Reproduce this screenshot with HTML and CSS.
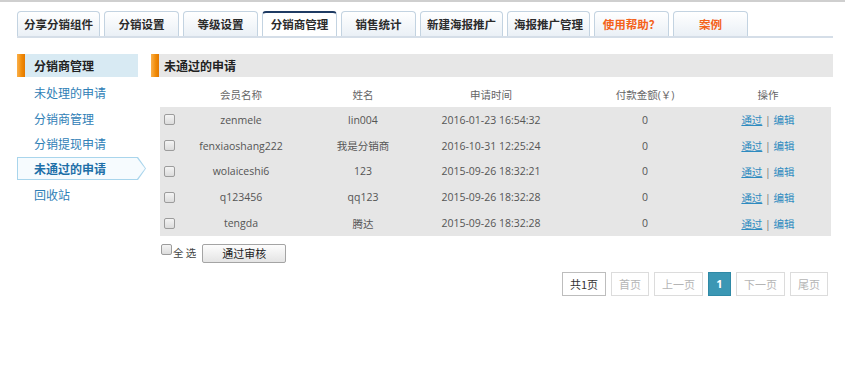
FILE: index.html
```html
<!DOCTYPE html>
<html lang="zh-CN">
<head>
<meta charset="utf-8">
<title>未通过的申请</title>
<link rel="stylesheet" href="styles.css">
</head>
<body>
<div class="page">
  <div class="tabs">
    <a class="tab wide">分享分销组件</a>
    <a class="tab">分销设置</a>
    <a class="tab">等级设置</a>
    <a class="tab active">分销商管理</a>
    <a class="tab">销售统计</a>
    <a class="tab wide">新建海报推广</a>
    <a class="tab wide">海报推广管理</a>
    <a class="tab orange">使用帮助？</a>
    <a class="tab orange">案例</a>
  </div>

  <div class="content">
    <aside class="sidebar">
      <div class="side-head"><span class="bar"></span>分销商管理</div>
      <ul class="side-list">
        <li class="side-item">未处理的申请</li>
        <li class="side-item">分销商管理</li>
        <li class="side-item">分销提现申请</li>
        <li class="side-item active"><span>未通过的申请</span></li>
        <li class="side-item">回收站</li>
      </ul>
    </aside>

    <main class="main">
      <div class="main-head"><span class="bar"></span>未通过的申请</div>
      <div class="table">
        <div class="row head">
          <div></div>
          <div>会员名称</div>
          <div>姓名</div>
          <div>申请时间</div>
          <div>付款金额(￥)</div>
          <div>操作</div>
          <div></div>
        </div>
        <div class="body">
          <div class="row">
            <div class="cbcell"><span class="cb"></span></div>
            <div>zenmele</div>
            <div>lin004</div>
            <div>2016-01-23 16:54:32</div>
            <div>0</div>
            <div class="ops"><a class="pass">通过</a> | <a class="edit">编辑</a></div>
            <div></div>
          </div>
          <div class="row">
            <div class="cbcell"><span class="cb"></span></div>
            <div>fenxiaoshang222</div>
            <div>我是分销商</div>
            <div>2016-10-31 12:25:24</div>
            <div>0</div>
            <div class="ops"><a class="pass">通过</a> | <a class="edit">编辑</a></div>
            <div></div>
          </div>
          <div class="row">
            <div class="cbcell"><span class="cb"></span></div>
            <div>wolaiceshi6</div>
            <div>123</div>
            <div>2015-09-26 18:32:21</div>
            <div>0</div>
            <div class="ops"><a class="pass">通过</a> | <a class="edit">编辑</a></div>
            <div></div>
          </div>
          <div class="row">
            <div class="cbcell"><span class="cb"></span></div>
            <div>q123456</div>
            <div>qq123</div>
            <div>2015-09-26 18:32:28</div>
            <div>0</div>
            <div class="ops"><a class="pass">通过</a> | <a class="edit">编辑</a></div>
            <div></div>
          </div>
          <div class="row">
            <div class="cbcell"><span class="cb"></span></div>
            <div>tengda</div>
            <div>腾达</div>
            <div>2015-09-26 18:32:28</div>
            <div>0</div>
            <div class="ops"><a class="pass">通过</a> | <a class="edit">编辑</a></div>
            <div></div>
          </div>
        </div>
      </div>

      <div class="foot">
        <span class="cb small"></span><span class="all">全 选</span>
        <button class="btn">通过审核</button>
      </div>

      <div class="pager">
        <span class="pg total">共1页</span>
        <span class="pg w38">首页</span>
        <span class="pg w49">上一页</span>
        <span class="pg cur">1</span>
        <span class="pg w49">下一页</span>
        <span class="pg w38">尾页</span>
      </div>
    </main>
  </div>
</div>
</body>
</html>
```

FILE: styles.css
```css
* { box-sizing: border-box; }
html, body { margin: 0; padding: 0; background: #fff; }
body {
  font-family: "Noto Sans CJK SC", "Noto Sans", sans-serif;
  font-size: 12px;
  color: #333;
  width: 845px;
  height: 374px;
  overflow: hidden;
}
.page {
  border-top: 2px solid #cfcfcf;
  padding-top: 9px;
}

/* Tabs */
.tabs {
  display: flex;
  gap: 4px;
  margin-left: 17px;
  width: 816px;
  border-bottom: 2px solid #d5dee8;
  height: 27px;
}
.tab {
  display: block;
  min-width: 75px;
  height: 25px;
  padding: 0 6px;
  border: 1px solid #c3d3e1;
  border-bottom: none;
  border-radius: 4px 4px 0 0;
  background: linear-gradient(#ffffff, #eaf0f6);
  text-align: center;
  font-weight: bold;
  font-size: 11.5px;
  line-height: 24px;
  color: #2b2b2b;
  white-space: nowrap;
}
.tab.wide { min-width: 83px; }
.tab.active {
  background: #fff;
  border-top: 2px solid #1f3b63;
  line-height: 23px;
}
.tab.orange { color: #f4621a; }

/* Layout */
.content {
  display: flex;
  margin-top: 16px;
  padding-left: 17px;
  gap: 13px;
}
.sidebar { width: 121px; }
.main { width: 682px; }

.bar {
  display: block;
  width: 8px;
  height: 23px;
  background: linear-gradient(90deg, #fbb04a, #f08a06 60%, #e37800);
  margin-right: 9px;
  flex: none;
}
.side-head, .main-head {
  display: flex;
  align-items: center;
  height: 23px;
  font-weight: bold;
  font-size: 12px;
  color: #222;
}
.side-head { background: #d8eaf3; }
.main-head { background: #e7e7e7; padding-right: 0; }
.main-head .bar { margin-right: 5px; }

.side-list {
  list-style: none;
  margin: 3px 0 0 0;
  padding: 0;
}
.side-item {
  height: 25.5px;
  line-height: 25.5px;
  padding-left: 17px;
  color: #2f80b6;
  font-size: 12px;
}
.side-item.active {
  position: relative;
  width: 129px;
  padding-left: 0;
  padding-top: 0.5px;
}
.side-item.active span {
  position: relative;
  display: block;
  height: 23px;
  line-height: 23px;
  padding-left: 17px;
  color: #1e6fa8;
  font-weight: bold;
  z-index: 1;
}
.side-item.active::before,
.side-item.active::after {
  content: "";
  position: absolute;
  left: 0;
  top: 0.5px;
  width: 129px;
  height: 23px;
  clip-path: polygon(0 0, calc(100% - 8px) 0, 100% 50%, calc(100% - 8px) 100%, 0 100%);
  background: #a9d5ec;
}
.side-item.active::after {
  left: 1px;
  top: 1.5px;
  width: 127px;
  height: 21px;
  background: #f6fbfe;
}

/* Table */
.table {
  margin: 4px 0 0 9px;
  width: 671px;
  font-family: "Open Sans", "Noto Sans CJK SC", sans-serif;
  font-size: 10.5px;
  color: #555;
}
.row {
  display: grid;
  grid-template-columns: 25px 112px 132px 124px 184px 62px 32px;
  align-items: center;
  text-align: center;
  height: 25.8px;
}
.row.head { height: 26px; color: #666; }
.body { background: #e6e6e6; }
.cbcell { text-align: left; padding-left: 4px; display: flex; align-items: center; }
.cb {
  display: inline-block;
  width: 11px;
  height: 11px;
  border: 1px solid #9c9c9c;
  border-radius: 2px;
  background: linear-gradient(#f4f4f4, #dcdcdc);
}
.ops { color: #777; white-space: nowrap; }
.ops a { color: #2e8bc0; }
.ops a.pass { text-decoration: underline; }

/* Footer */
.foot {
  display: flex;
  align-items: flex-start;
  margin: 8px 0 0 10px;
  height: 19px;
}
.cb.small { margin-top: 0; }
.all {
  font-size: 10.5px;
  color: #444;
  line-height: 14px;
  margin: 2px 0 0 1px;
}
.btn {
  margin-left: 6px;
  width: 84px;
  height: 19px;
  padding: 0;
  border: 1px solid #a4a4a4;
  border-radius: 2px;
  background: linear-gradient(#fdfdfd, #e4e4e4);
  font-family: "Noto Sans CJK SC", sans-serif;
  font-size: 11px;
  line-height: 17px;
  color: #222;
}

/* Pager */
.pager {
  display: flex;
  justify-content: flex-end;
  gap: 5px;
  margin: 9px 5px 0 0;
}
.pg {
  display: block;
  height: 24px;
  line-height: 22px;
  border: 1px solid #dcdcdc;
  text-align: center;
  font-size: 11px;
  color: #b5b5b5;
  background: #fff;
}
.pg.total { width: 44px; color: #333; border-color: #bdbdbd; }
.pg.w38 { width: 38px; }
.pg.w49 { width: 49px; }
.pg.cur {
  width: 23px;
  background: #3b97b4;
  border-color: #2f89a6;
  color: #fff;
  font-weight: bold;
  font-family: "Open Sans", sans-serif;
}
```
